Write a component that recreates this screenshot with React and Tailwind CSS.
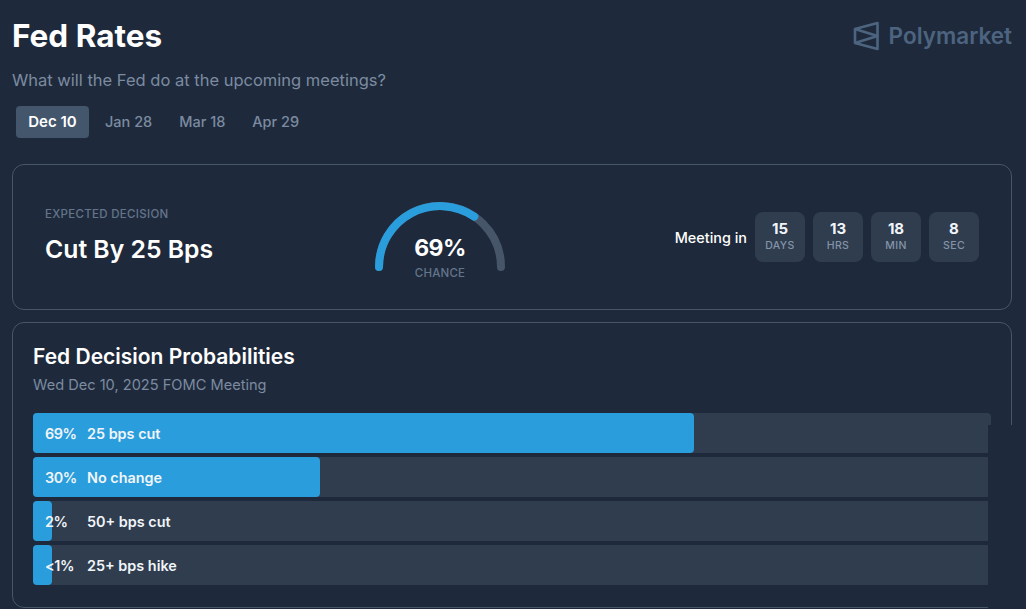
const tabs = ['Dec 10', 'Jan 28', 'Mar 18', 'Apr 29'];

const countdown = [
  { value: '15', unit: 'DAYS' },
  { value: '13', unit: 'HRS' },
  { value: '18', unit: 'MIN' },
  { value: '8', unit: 'SEC' },
];

const outcomes = [
  { pct: '69%', label: '25 bps cut', width: 661 },
  { pct: '30%', label: 'No change', width: 287 },
  { pct: '2%', label: '50+ bps cut', width: 19 },
  { pct: '<1%', label: '25+ bps hike', width: 19 },
];

function Logo() {
  return (
    <svg width="26" height="30" viewBox="0 0 26 30" fill="none" stroke="#4d6480" strokeWidth="2.6" strokeLinejoin="round">
      <path d="M24.5 2 V28 L2 22 V8 Z" />
      <path d="M2 8 L24.5 15 L2 22" />
    </svg>
  );
}

function Gauge() {
  return (
    <div className="relative w-[140px] h-[78px] shrink-0">
      <svg width="140" height="78" viewBox="0 0 140 78" fill="none" strokeWidth="8" strokeLinecap="round">
        <path d="M9 69 A61 61 0 0 1 131 69" stroke="#475569" />
        <path d="M9 69 A61 61 0 0 1 104.3 18.6" stroke="#2a9ddc" />
      </svg>
      <div className="absolute inset-x-0 top-[34px] flex flex-col items-center">
        <div className="text-[23px] leading-[32px] font-bold tracking-[-0.5px] text-white">69%</div>
        <div className="mt-[1px] text-[11.5px] leading-[16px] font-medium tracking-[0.2px] text-[#64748b]">CHANCE</div>
      </div>
    </div>
  );
}

export default function App() {
  return (
    <div className="relative w-[1026px] h-[609px] overflow-hidden bg-[#1e2a3b] font-['Inter',sans-serif] pl-3 pr-[14px] pt-[16px]">
      <div className="flex items-center justify-between h-[40px]">
        <h1 className="text-[31.5px] leading-[40px] font-bold text-white">Fed Rates</h1>
        <div className="flex items-center gap-[10px]">
          <Logo />
          <span className="text-[22.5px] leading-[32px] font-semibold text-[#4d6480]">Polymarket</span>
        </div>
      </div>
      <p className="mt-[12px] text-[16.5px] leading-[24px] text-[#7c8ba1]">What will the Fed do at the upcoming meetings?</p>

      <div className="flex gap-[3px] mt-[14px] ml-1">
        {tabs.map((t, i) => (
          <button key={t} className={i === 0
            ? 'w-[73px] mr-[1px] h-[32px] rounded text-[15px] leading-[30px] pb-[1px] font-semibold bg-[#43566c] text-white'
            : 'h-[32px] px-3 rounded text-[14.5px] leading-[30px] pb-[1px] font-medium text-[#7c8ba1]'}>
            {t}
          </button>
        ))}
      </div>

      <div className="mt-[26px] h-[146px] rounded-xl border border-[#475569] flex items-center px-[32px]">
        <div className="w-[325px] shrink-0">
          <div className="mt-[-4px] text-[11.5px] leading-[16px] font-medium tracking-[0.3px] text-[#64748b]">EXPECTED DECISION</div>
          <div className="mt-[11px] text-[24.75px] leading-[32px] font-semibold text-white">Cut By 25 Bps</div>
        </div>
        <Gauge />
        <div className="ml-auto flex items-center gap-[8px]">
          <span className="mt-[1px] text-[14.4px] font-medium text-white">Meeting in</span>
          {countdown.map(c => (
            <div key={c.unit} className="w-[50px] h-[50px] rounded-lg bg-[#2f3d4f] flex flex-col items-center justify-center">
              <div className="text-[15px] leading-[18px] mt-[-1px] font-bold text-[#f1f5f9]">{c.value}</div>
              <div className="text-[10.5px] leading-[15px] font-medium tracking-[0.4px] text-[#8494a8]">{c.unit}</div>
            </div>
          ))}
        </div>
      </div>

      <div className="mt-[12px] h-[286px] rounded-xl border border-[#475569] px-[20px] pt-[20px]">
        <h2 className="text-[21px] leading-[28px] font-semibold text-white">Fed Decision Probabilities</h2>
        <p className="mt-[4px] text-[14.6px] leading-[20px] text-[#7c8ba1]">Wed Dec 10, 2025 FOMC Meeting</p>
        <div className="mt-[18px] flex flex-col gap-[4px] w-[958px]">
          {outcomes.map(o => (
            <div key={o.label} className="relative h-[40px] rounded bg-[#2f3d4f]">
              <div className="absolute inset-y-0 left-0 rounded bg-[#2a9ddc]" style={{ width: o.width }} />
              <div className="relative h-full flex items-center pl-[12px] pt-[1px] text-[14.4px] font-semibold text-[#f1f5f9]">
                <span className="w-[42px] tracking-[-0.4px]">{o.pct}</span>
                <span>{o.label}</span>
              </div>
            </div>
          ))}
        </div>
      </div>

      <div className="absolute left-[988px] top-[425px] w-[38px] h-[184px] bg-[#1e2a3b]" />
    </div>
  );
}
